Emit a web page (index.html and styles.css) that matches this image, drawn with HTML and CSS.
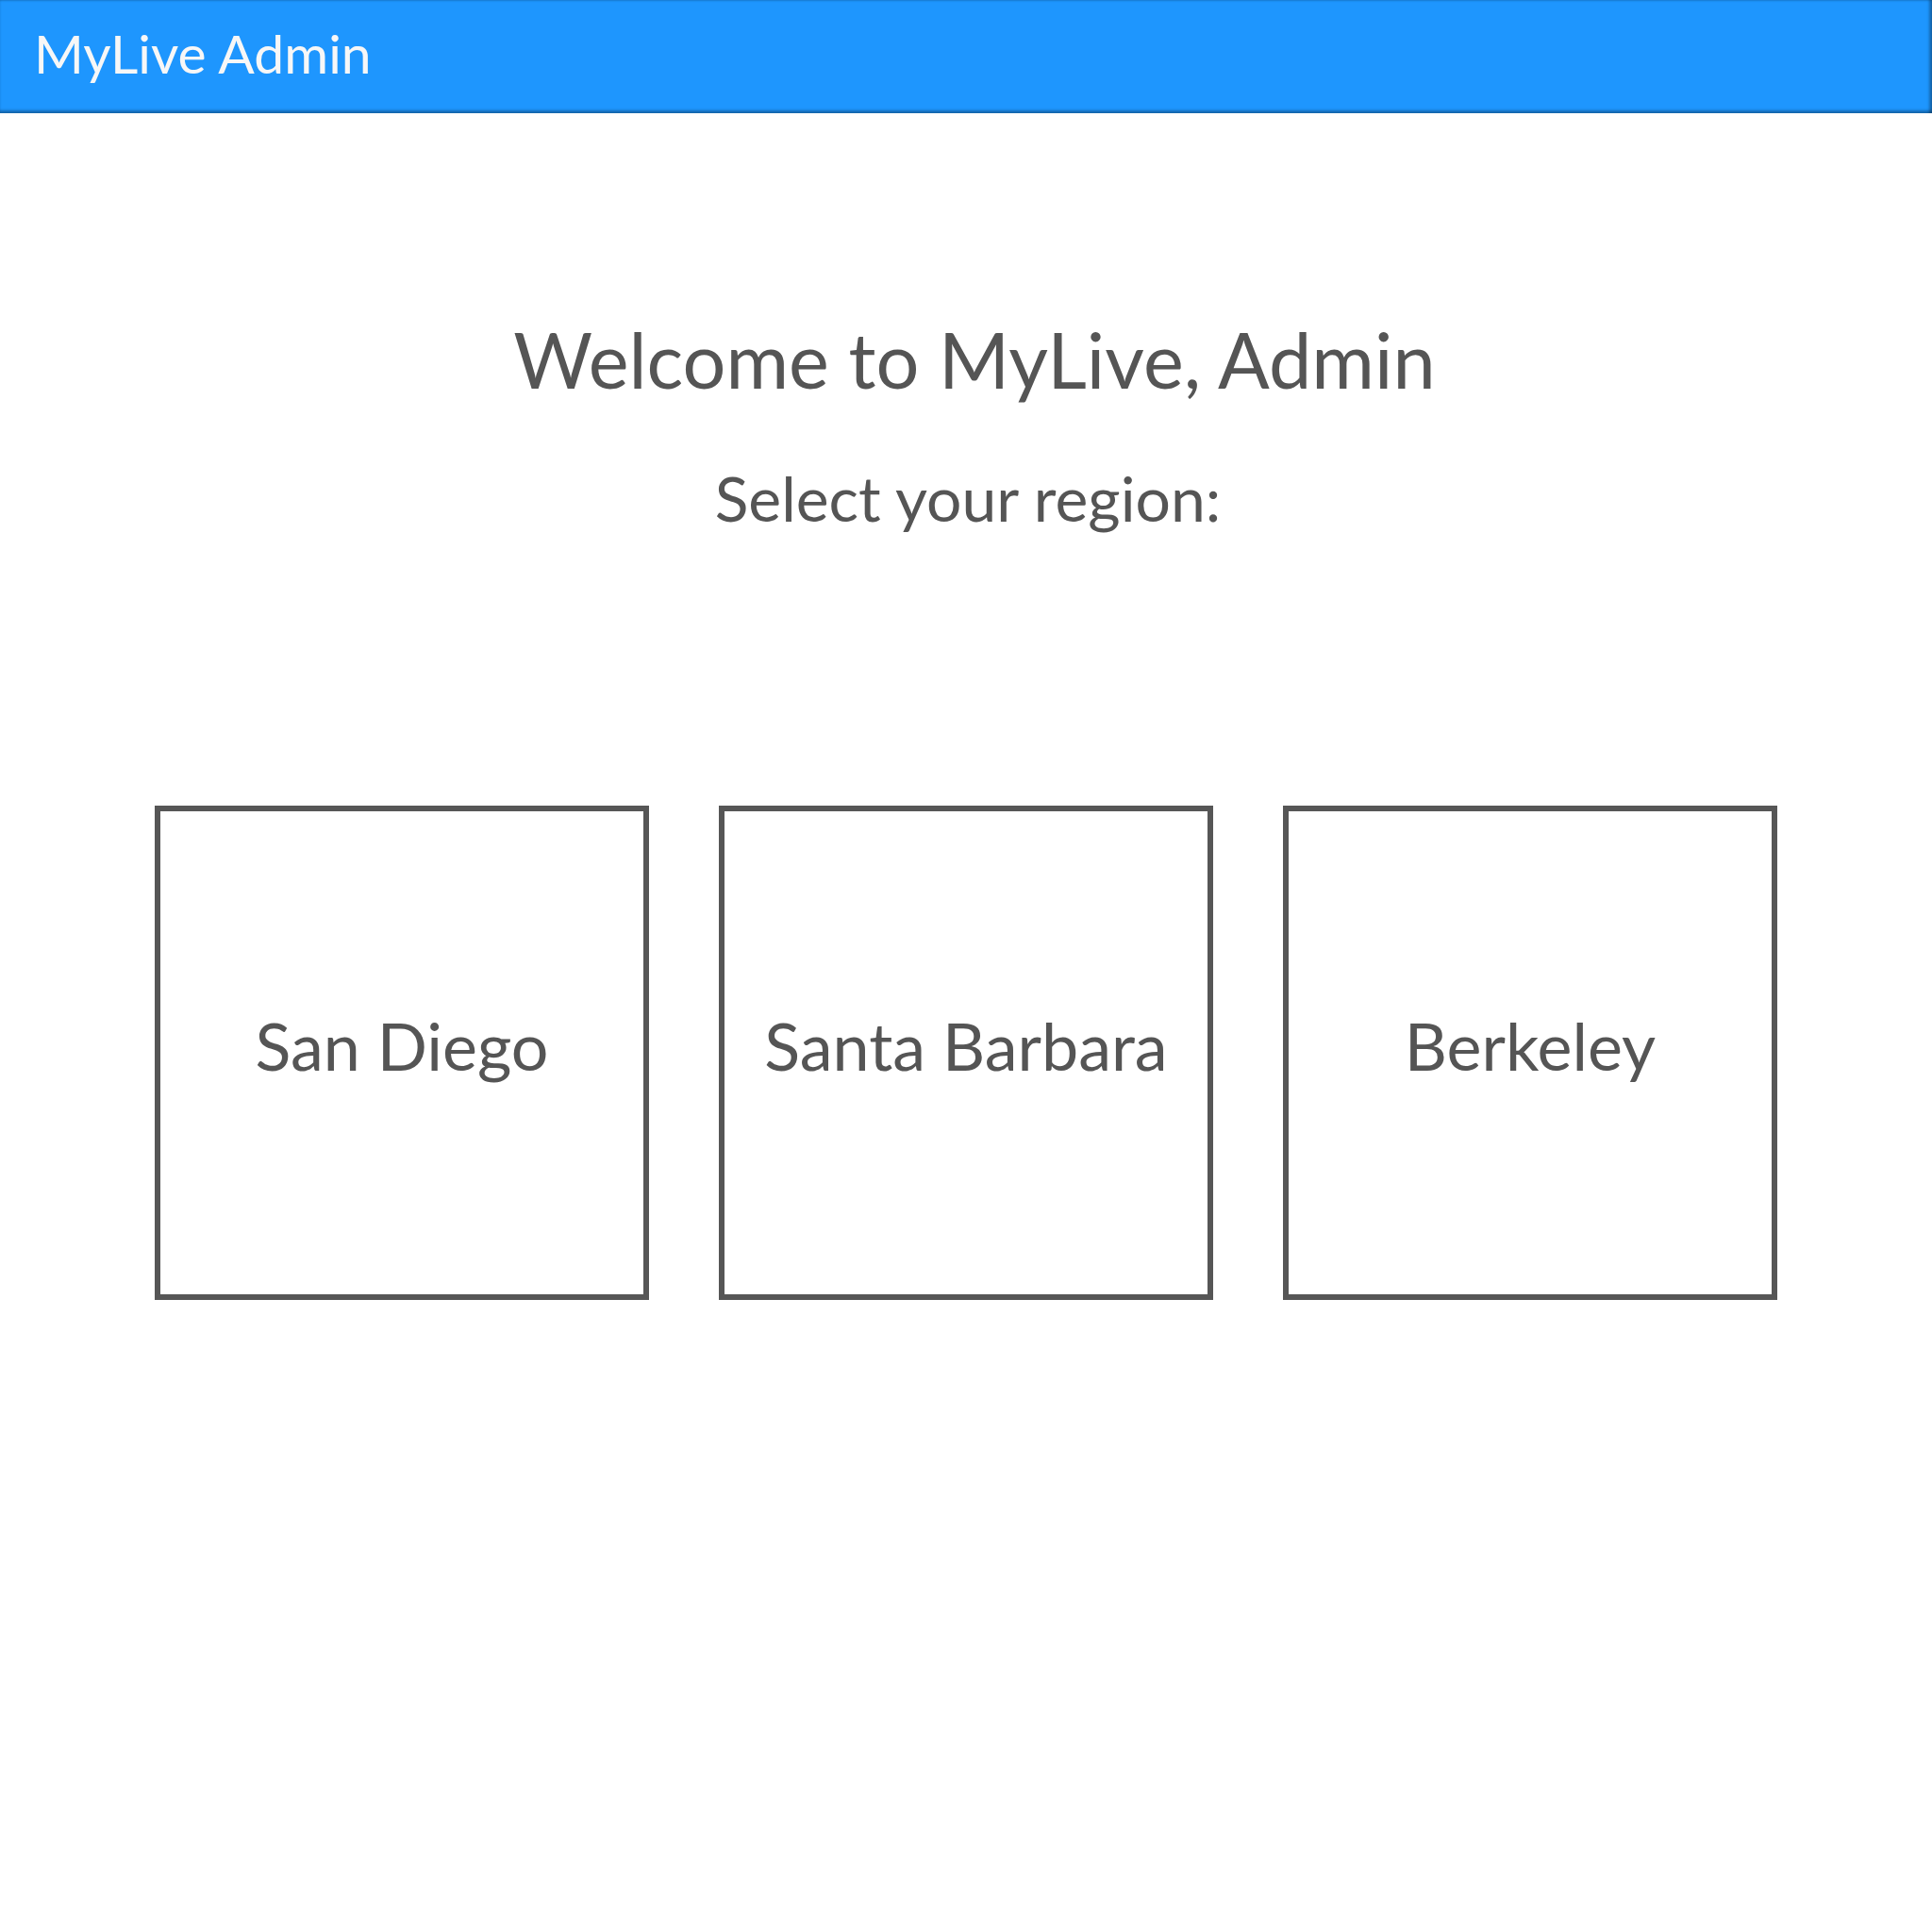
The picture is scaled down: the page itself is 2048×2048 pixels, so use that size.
FILE: index.html
```html
<!DOCTYPE html>
<html>
<head>
<meta charset="utf-8">
<title>MyLive Admin</title>
<link rel="stylesheet" href="styles.css">
</head>
<body>
<header class="topbar">
  <div class="brand">MyLive Admin</div>
</header>
<main class="content">
  <h1 class="title">Welcome to MyLive, Admin</h1>
  <p class="subtitle">Select your region:</p>
  <div class="regions">
    <div class="region">San Diego</div>
    <div class="region">Santa Barbara</div>
    <div class="region">Berkeley</div>
  </div>
</main>
</body>
</html>
```
FILE: styles.css
```css
html, body {
  margin: 0;
  padding: 0;
  background: #ffffff;
}
body {
  font-family: "Lato", "Open Sans", sans-serif;
  font-weight: 400;
  color: #555555;
}
.topbar {
  box-sizing: border-box;
  height: 120px;
  background: #1e96fe;
  padding: 28px 0 0 36px;
  box-shadow: inset 0 -4px 3px -1px rgba(0, 0, 0, 0.3),
              inset -4px 0 3px -1px rgba(0, 0, 0, 0.3),
              inset 0 2px 2px -1px rgba(0, 0, 0, 0.15);
}
.brand {
  font-size: 57px;
  line-height: 1;
  color: #f7f7f7;
}
.content {
  display: flex;
  flex-direction: column;
  align-items: center;
}
.title {
  margin: 220px 0 0 0;
  padding-left: 18px;
  font-size: 81px;
  font-weight: 400;
  line-height: 1;
}
.subtitle {
  margin: 74px 0 0 0;
  padding-left: 4px;
  font-size: 66px;
  line-height: 1;
}
.regions {
  margin-top: 293px;
  display: flex;
  justify-content: center;
  gap: 74px;
}
.region {
  box-sizing: border-box;
  width: 524px;
  height: 524px;
  border: 6px solid #565656;
  display: flex;
  align-items: center;
  justify-content: center;
  padding-bottom: 16px;
  font-size: 70px;
  line-height: 1;
}
```
